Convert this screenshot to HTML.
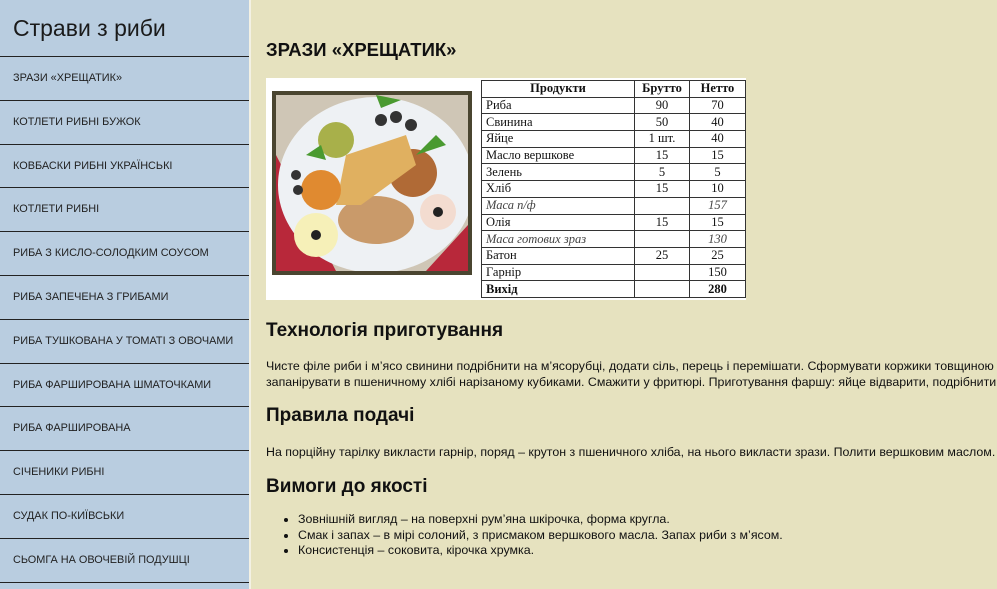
<!DOCTYPE html>
<html><head><meta charset="utf-8"><style>
html,body{margin:0;padding:0;width:997px;height:589px;overflow:hidden;background:#e6e2bf;font-family:"Liberation Sans","DejaVu Sans",sans-serif;color:#111}
.side{position:absolute;left:0;top:0;width:249px;height:589px;background:#b9cde0;border-right:2px solid #f3f1e4}
.side h1{margin:0;height:57px;font-weight:normal;font-size:23px;line-height:57px;padding-left:13px;color:#1a1a1a;border-bottom:1px solid #222;box-sizing:border-box}
.side div{height:43.8px;box-sizing:border-box;border-bottom:1px solid #222;font-size:10.9px;line-height:43px;padding-left:13px;color:#222;white-space:nowrap}
.main{position:absolute;left:266px;top:0;width:731px;overflow:hidden;white-space:nowrap}
h2.t{position:absolute;top:39px;margin:0;font-size:18.5px;font-weight:bold;left:0}
.img{position:absolute;left:0;top:78px;width:480px;height:222px;background:#fff}
.photo{position:absolute;left:6px;top:13px;width:200px;height:184px;background:#4a4530;overflow:hidden}
.photo .in{position:absolute;left:4px;top:4px;width:192px;height:176px;background:#c9c2b0;overflow:hidden}
table{position:absolute;left:215px;top:2px;border-collapse:collapse;font-family:"Liberation Serif",serif;font-size:12.5px;background:#fff}
td{border:1px solid #333;height:15.7px;padding:0 4px;line-height:15px}
td.c{text-align:center}
.b{font-weight:bold}
.i{font-style:italic;color:#444}
.h3{position:absolute;left:0;margin:0;font-size:19px;font-weight:600}
.p{position:absolute;left:0;font-size:12.4px;line-height:16px;margin:0}
ul{position:absolute;left:0;top:512px;margin:0;padding-left:32px;font-size:12.4px;line-height:15.5px}
</style></head><body>
<div class="side">
<h1>Страви з риби</h1>
<div>ЗРАЗИ «ХРЕЩАТИК»</div>
<div>КОТЛЕТИ РИБНІ БУЖОК</div>
<div>КОВБАСКИ РИБНІ УКРАЇНСЬКІ</div>
<div>КОТЛЕТИ РИБНІ</div>
<div>РИБА З КИСЛО-СОЛОДКИМ СОУСОМ</div>
<div>РИБА ЗАПЕЧЕНА З ГРИБАМИ</div>
<div>РИБА ТУШКОВАНА У ТОМАТІ З ОВОЧАМИ</div>
<div>РИБА ФАРШИРОВАНА ШМАТОЧКАМИ</div>
<div>РИБА ФАРШИРОВАНА</div>
<div>СІЧЕНИКИ РИБНІ</div>
<div>СУДАК ПО-КИЇВСЬКИ</div>
<div>СЬОМГА НА ОВОЧЕВІЙ ПОДУШЦІ</div>
</div>
<div class="main" style="height:589px">
<h2 class="t">ЗРАЗИ «ХРЕЩАТИК»</h2>
<div class="img">
<div class="photo"><div class="in">
<svg width="192" height="176" viewBox="0 0 192 176">
<rect width="192" height="176" fill="#cfc6b6"/>
<path d="M0 60 L0 176 L60 176 Z" fill="#b8283a"/>
<path d="M150 176 L192 130 L192 176Z" fill="#b8283a"/>
<ellipse cx="100" cy="90" rx="98" ry="88" fill="#eef1f4"/>
<circle cx="137" cy="78" r="24" fill="#b06a36"/>
<ellipse cx="100" cy="125" rx="38" ry="24" fill="#c99a6a"/>
<path d="M70 60 L130 40 L140 70 L85 110 L60 110Z" fill="#e0b060"/>
<circle cx="60" cy="45" r="18" fill="#a8b04a"/>
<circle cx="45" cy="95" r="20" fill="#e08a30"/>
<circle cx="40" cy="140" r="22" fill="#f6f0b8"/>
<circle cx="162" cy="117" r="18" fill="#f3dcd0"/>
<circle cx="162" cy="117" r="5" fill="#222"/><circle cx="40" cy="140" r="5" fill="#222"/>
<circle cx="105" cy="25" r="6" fill="#333"/><circle cx="120" cy="22" r="6" fill="#333"/><circle cx="135" cy="30" r="6" fill="#333"/>
<circle cx="20" cy="80" r="5" fill="#333"/><circle cx="22" cy="95" r="5" fill="#333"/>
<path d="M140 60 l20 -20 l10 10 z" fill="#4a9a30"/><path d="M30 60 l15 -10 l5 15z" fill="#4a9a30"/><path d="M100 0 l25 5 l-20 8z" fill="#4a9a30"/>
</svg></div></div>
<table>
<tr><td class="c b" style="width:144px">Продукти</td><td class="c b" style="width:46px">Брутто</td><td class="c b" style="width:47px">Нетто</td></tr>
<tr><td>Риба</td><td class="c">90</td><td class="c">70</td></tr>
<tr><td>Свинина</td><td class="c">50</td><td class="c">40</td></tr>
<tr><td>Яйце</td><td class="c">1 шт.</td><td class="c">40</td></tr>
<tr><td>Масло вершкове</td><td class="c">15</td><td class="c">15</td></tr>
<tr><td>Зелень</td><td class="c">5</td><td class="c">5</td></tr>
<tr><td>Хліб</td><td class="c">15</td><td class="c">10</td></tr>
<tr><td class="i">Маса п/ф</td><td></td><td class="c i">157</td></tr>
<tr><td>Олія</td><td class="c">15</td><td class="c">15</td></tr>
<tr><td class="i">Маса готових зраз</td><td></td><td class="c i">130</td></tr>
<tr><td>Батон</td><td class="c">25</td><td class="c">25</td></tr>
<tr><td>Гарнір</td><td></td><td class="c">150</td></tr>
<tr><td class="b">Вихід</td><td></td><td class="c b">280</td></tr>
</table>
</div>
<h3 class="h3" style="top:320px">Технологія приготування</h3>
<p class="p" style="top:358px">Чисте філе риби і м’ясо свинини подрібнити на м’ясорубці, додати сіль, перець і перемішати. Сформувати коржики товщиною 1 см, покласти фарш, защипати краї,<br>запанірувати в пшеничному хлібі нарізаному кубиками. Смажити у фритюрі. Приготування фаршу: яйце відварити, подрібнити, з'єднати з маслом і зеленню.</p>
<h3 class="h3" style="top:405px">Правила подачі</h3>
<p class="p" style="top:444px">На порційну тарілку викласти гарнір, поряд – крутон з пшеничного хліба, на нього викласти зрази. Полити вершковим маслом.</p>
<h3 class="h3" style="top:476px">Вимоги до якості</h3>
<ul>
<li>Зовнішній вигляд – на поверхні рум’яна шкірочка, форма кругла.</li>
<li>Смак і запах – в мірі солоний, з присмаком вершкового масла. Запах риби з м’ясом.</li>
<li>Консистенція – соковита, кірочка хрумка.</li>
</ul>
</div>
</body></html>
